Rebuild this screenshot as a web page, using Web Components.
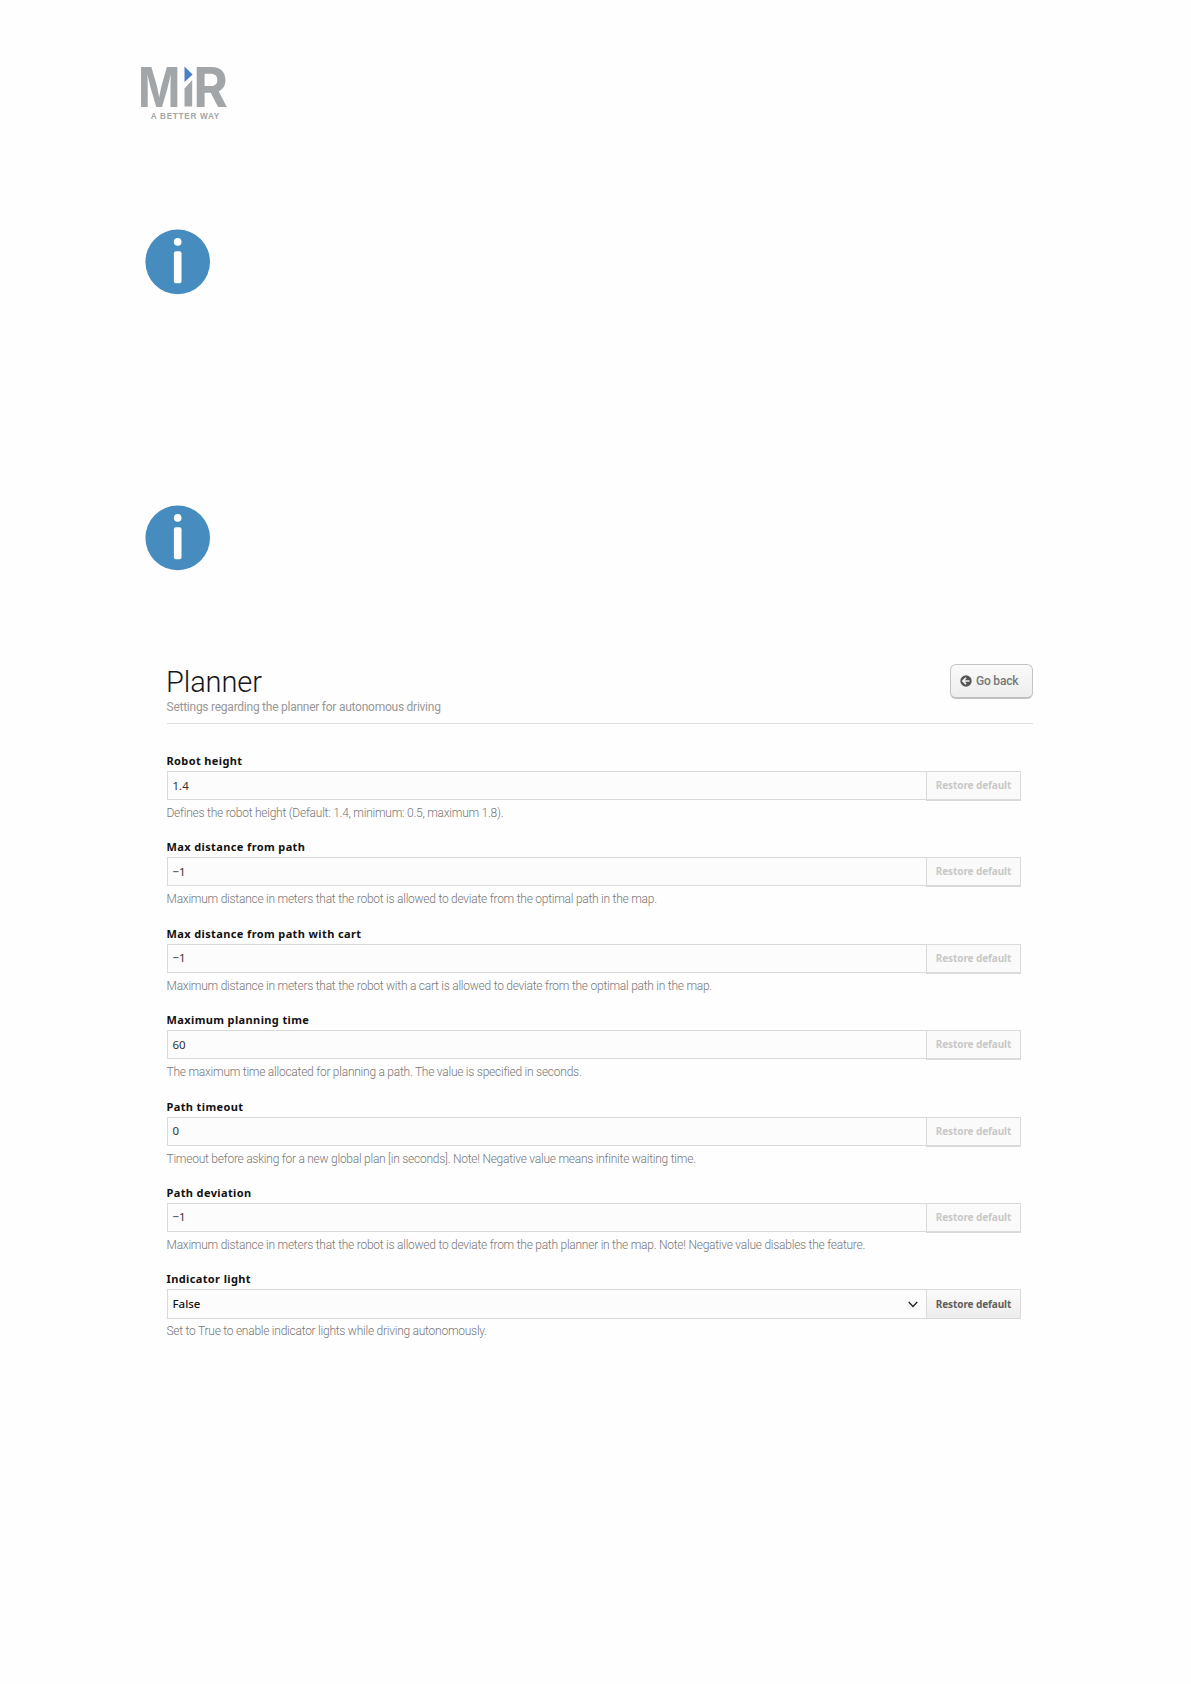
<!DOCTYPE html>
<html lang="en">
<head>
<meta charset="utf-8">
<title>Planner</title>
<style>
    body {
        margin: 0;
        background: #fefefe;
        font-family: Roboto, "Liberation Sans", sans-serif;
    }
</style>
</head>
<body>
<manual-page>
    <brand-logo slot="brand"></brand-logo>
    <info-badge slot="info"></info-badge>
    <info-badge slot="info"></info-badge>
    <settings-header>
        <span slot="title">Planner</span>
        <span slot="subtitle">Settings regarding the planner for autonomous driving</span>
    </settings-header>
    <setting-field label="Robot height" value="1.4">Defines the robot height (Default: 1.4, minimum: 0.5, maximum 1.8).</setting-field>
    <setting-field label="Max distance from path" value="−1">Maximum distance in meters that the robot is allowed to deviate from the optimal path in the map.</setting-field>
    <setting-field label="Max distance from path with cart" value="−1">Maximum distance in meters that the robot with a cart is allowed to deviate from the optimal path in the map.</setting-field>
    <setting-field label="Maximum planning time" value="60">The maximum time allocated for planning a path. The value is specified in seconds.</setting-field>
    <setting-field label="Path timeout" value="0">Timeout before asking for a new global plan [in seconds]. Note! Negative value means infinite waiting time.</setting-field>
    <setting-field label="Path deviation" value="−1">Maximum distance in meters that the robot is allowed to deviate from the path planner in the map. Note! Negative value disables the feature.</setting-field>
    <setting-field label="Indicator light" value="False" select>Set to True to enable indicator lights while driving autonomously.</setting-field>
</manual-page>

<script>
class ManualPage extends HTMLElement {
    connectedCallback() {
        this.attachShadow({ mode: 'open' }).innerHTML = `
        <style>
            :host {
                display: block;
                box-sizing: border-box;
                height: 1684px;
                padding-top: 50px;
                overflow: hidden;
            }
            .brand {
                height: 179px;
                padding-left: 130px;
            }
            .info {
                display: grid;
                grid-auto-rows: 276px;
                height: 435px;
                padding-left: 145px;
            }
            main {
                width: 866px;
                margin-left: 167px;
            }
        </style>
        <div class="brand"><slot name="brand"></slot></div>
        <div class="info"><slot name="info"></slot></div>
        <main><slot></slot></main>`;
    }
}

class BrandLogo extends HTMLElement {
    connectedCallback() {
        this.attachShadow({ mode: 'open' }).innerHTML = `
        <style>
            :host { display: block; width: 110px; height: 80px; }
            svg { display: block; }
            text { font-family: Inter, Roboto, sans-serif; font-weight: 700; fill: #a3a6a8; }
            .tagline { font-family: "Liberation Sans", sans-serif; }
        </style>
        <svg width="110" height="80" viewBox="-10 -16 110 80">
            <text transform="translate(-2.1 40.6) scale(.825 1)" font-size="55">M</text>
            <text transform="translate(53.3 40.6) scale(.96 1)" font-size="55">R</text>
            <path d="M44.5 40.6V22.500L52.200 14v26.600z" fill="#a3a6a8"/>
            <path d="M44.500 .5v15.600L52.600 8.400z" fill="#4a80c8"/>
            <text class="tagline" x="10.800" y="52.700" font-size="8.200" textLength="68.500">A BETTER WAY</text>
        </svg>`;
    }
}

class InfoBadge extends HTMLElement {
    connectedCallback() {
        this.attachShadow({ mode: 'open' }).innerHTML = `
        <style>
            :host { display: block; width: 66px; height: 66px; }
            svg { display: block; }
        </style>
        <svg width="66" height="66" viewBox="0 0 66 66">
            <circle cx="32.7" cy="32.9" r="32.3" fill="#468cbe"/>
            <circle cx="32.7" cy="12.9" r="3.8" fill="#fff"/>
            <rect x="28.9" y="22.2" width="7.600" height="32" rx="2" fill="#fff"/>
        </svg>`;
    }
}

class SettingsHeader extends HTMLElement {
    connectedCallback() {
        this.attachShadow({ mode: 'open' }).innerHTML = `
        <style>
            :host {
                display: flex;
                justify-content: space-between;
                box-sizing: border-box;
                height: 60px;
                margin-bottom: 29px;
                border-bottom: 1px solid #dcdcdc;
            }
            h1 {
                margin: 0 0 0 -1px;
                color: #15171c;
                font-size: 29px;
                font-weight: 300;
                letter-spacing: -.1px;
                line-height: 36px;
            }
            p {
                margin: 0 0 0 -.5px;
                color: #989898;
                font-size: 12px;
                letter-spacing: -.25px;
                line-height: 14px;
            }
        </style>
        <div>
            <h1><slot name="title"></slot></h1>
            <p><slot name="subtitle"></slot></p>
        </div>
        <back-button>Go back</back-button>`;
    }
}

class BackButton extends HTMLElement {
    connectedCallback() {
        this.attachShadow({ mode: 'open' }).innerHTML = `
        <style>
            :host {
                display: flex;
                align-items: center;
                gap: 4px;
                box-sizing: border-box;
                width: 83px;
                height: 35px;
                padding-left: 9px;
                border: 1px solid #c4c4c4;
                border-bottom: 2px solid #c0c0c0;
                border-radius: 6px;
                background: linear-gradient(#fafafa, #ededed);
                color: #777;
                font-size: 12px;
                font-weight: 500;
                letter-spacing: -.2px;
                white-space: nowrap;
            }
        </style>
        <svg width="12" height="12" viewBox="0 0 12 12">
            <circle cx="6" cy="6" r="5.700" fill="#555"/>
            <path d="M9.500 6H3M6 2.900 2.900 6 6 9.100" fill="none" stroke="#f4f4f4" stroke-width="1.600"/>
        </svg>
        <span><slot></slot></span>`;
    }
}

class SettingField extends HTMLElement {
    connectedCallback() {
        const select = this.hasAttribute('select');
        this.attachShadow({ mode: 'open' }).innerHTML = `
        <style>
            :host { display: block; height: 86.4px; }
            .label {
                height: 18px;
                margin-left: -.5px;
                color: #111;
                font: 700 11px/16px "Noto Sans", sans-serif;
                letter-spacing: .38px;
            }
            .row { display: flex; align-items: flex-start; }
            .input {
                display: flex;
                align-items: center;
                justify-content: space-between;
                box-sizing: border-box;
                width: 760px;
                height: 29px;
                padding: 0 8px 1px 4.5px;
                border: 1px solid #d9d9d9;
                background: #fcfcfc;
                color: #333;
                font: 11.5px "Noto Sans", sans-serif;
            }
            .input svg { margin-top: 1px; }
            :host([select]) .input { height: 30px; color: #111; font-weight: 500; }
            .restore {
                box-sizing: border-box;
                width: 95px;
                height: 30px;
                margin-left: -1px;
                border: 1px solid #dadada;
                border-width: 1px 1px 2px 1px;
                background: #fafafa;
                color: #c8c8c8;
                font: 700 10px/27px "Noto Sans", sans-serif;
                letter-spacing: -.1px;
                text-align: center;
            }
            :host([select]) .restore {
                border-width: 1px;
                background: linear-gradient(#fbfbfb, #ececec);
                color: #606060;
                line-height: 28px;
            }
            .help {
                margin: 5px 0 0 -.5px;
                color: #777;
                font-size: 12px;
                font-weight: 300;
                letter-spacing: -.25px;
                line-height: 15px;
                white-space: nowrap;
            }
        </style>
        <div class="label">${this.getAttribute('label')}</div>
        <div class="row">
            <div class="input">
                <span>${this.getAttribute('value')}</span>
                ${select ? '<svg width="10" height="7" viewBox="0 0 10 7"><path d="m.700 1 4.300 4.500L9.300 1" fill="none" stroke="#222" stroke-width="1.300"/></svg>' : ''}
            </div>
            <div class="restore">Restore default</div>
        </div>
        <div class="help"><slot></slot></div>`;
    }
}

customElements.define('manual-page', ManualPage);
customElements.define('brand-logo', BrandLogo);
customElements.define('info-badge', InfoBadge);
customElements.define('back-button', BackButton);
customElements.define('settings-header', SettingsHeader);
customElements.define('setting-field', SettingField);
</script>
</body>
</html>
